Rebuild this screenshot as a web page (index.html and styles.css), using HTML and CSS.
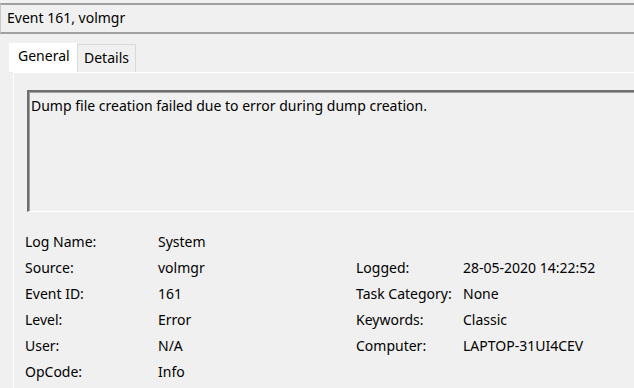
FILE: index.html
```html
<!DOCTYPE html>
<html lang="en">
<head>
    <meta charset="UTF-8">
    <title>Event 161, volmgr</title>
    <link rel="stylesheet" href="styles.css">
</head>
<body>
    <!-- Title bar -->
    <header class="titlebar">Event 161, volmgr</header>

    <!-- Tabs -->
    <div class="tabs">
        <div class="tab active">General</div>
        <div class="tab">Details</div>
    </div>

    <main class="panel">
        <div class="message">Dump file creation failed due to error during dump creation.</div>

        <div class="props">
            <span class="label">Log Name:</span>
            <span class="value">System</span>
            <span></span>
            <span></span>

            <span class="label">Source:</span>
            <span class="value">volmgr</span>
            <span class="label">Logged:</span>
            <span class="value">28-05-2020 14:22:52</span>

            <span class="label">Event ID:</span>
            <span class="value">161</span>
            <span class="label">Task Category:</span>
            <span class="value">None</span>

            <span class="label">Level:</span>
            <span class="value">Error</span>
            <span class="label">Keywords:</span>
            <span class="value">Classic</span>

            <span class="label">User:</span>
            <span class="value">N/A</span>
            <span class="label">Computer:</span>
            <span class="value">LAPTOP-31UI4CEV</span>

            <span class="label">OpCode:</span>
            <span class="value">Info</span>
            <span></span>
            <span></span>
        </div>
    </main>
</body>
</html>
```

FILE: styles.css
```css
html, body {
    height: 100%;
}
body {
    margin: 0;
    display: flex;
    flex-direction: column;
    background-color: #f0f0f0;
    font-family: "Noto Sans", "Open Sans", sans-serif;
    font-size: 14px;
    color: #000;
    overflow: hidden;
}
.titlebar {
    margin-top: 3px;
    height: 27px;
    line-height: 26px;
    padding-left: 6px;
    border-top: 2px solid #a0a0a0;
    border-bottom: 2px solid #a0a0a0;
    border-left: 1px solid #c8c8c8;
}
.tabs {
    display: flex;
    align-items: flex-end;
    height: 32px;
    margin-top: 6px;
    padding-left: 9px;
}
.tab {
    box-sizing: border-box;
    height: 28px;
    padding: 0 6px;
    line-height: 26px;
    border: 1px solid #d9d9d9;
    border-bottom: none;
    background-color: #f0f0f0;
}
.tab.active {
    height: 29px;
    width: 68px;
    padding-left: 8px;
    line-height: 23px;
    background-color: #fff;
    border-color: #fff;
}
.panel {
    flex: 1;
    margin-left: 13px;
    border-top: 1px solid #fff;
    border-left: 1px solid #fff;
    padding: 17px 0 0 13px;
}
.message {
    height: 115px;
    padding: 4px 0 0 2px;
    border-top: 2px solid #6e6e6e;
    border-left: 2px solid #6e6e6e;
    border-bottom: 1px solid #fff;
    box-shadow: inset 1px 1px 0 #a0a0a0;
}
.props {
    display: grid;
    grid-template-columns: 133px 198px 107px auto;
    grid-auto-rows: 26px;
    margin-top: 17px;
    margin-left: -2px;
}
.label, .value {
    line-height: 26px;
    white-space: nowrap;
}
```
